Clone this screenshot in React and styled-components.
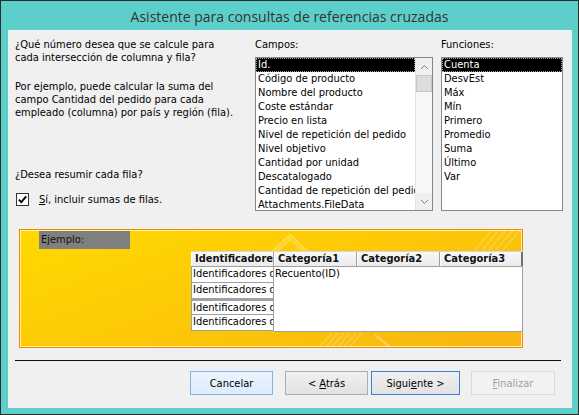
import React from "react";
import styled, { createGlobalStyle } from "styled-components";

const GlobalStyle = createGlobalStyle`
  html, body {
    margin: 0;
    padding: 0;
    background: #5ccfcb;
  }
  body {
    font-family: "DejaVu Sans Condensed", "DejaVu Sans", sans-serif;
    font-size: 11px;
    color: #000;
  }
`;

const Window = styled.div`
  width: 579px;
  height: 415px;
  box-sizing: border-box;
  border: 1px solid #2b2b2b;
  background: #5ccfcb;
  display: flex;
  flex-direction: column;
`;

const TitleBar = styled.div`
  height: 29px;
  display: flex;
  align-items: center;
  justify-content: center;
  font-family: "Open Sans", sans-serif;
  font-size: 14px;
  color: #333;
  padding-top: 1px;
  box-sizing: border-box;
`;

const Client = styled.div`
  flex: 1;
  margin: 0 6px 6px 7px;
  background: #f0f0f0;
  padding: 8px 8px 0 7px;
  display: flex;
  flex-direction: column;
`;

const TopSection = styled.div`
  display: grid;
  grid-template-columns: 232px 178px 122px;
  column-gap: 8px;
`;

const Column = styled.div`
  display: flex;
  flex-direction: column;
`;

const Text = styled.div`
  line-height: 13px;
  margin-top: ${p => p.$mt || 0}px;
  white-space: nowrap;
`;

const CheckRow = styled.label`
  display: flex;
  align-items: center;
  height: 13px;
  margin-top: 12px;
  margin-left: 1px;
  gap: 10px;
`;

const CheckBox = styled.span`
  width: 13px;
  height: 13px;
  box-sizing: border-box;
  border: 1px solid #333;
  background: #fff;
  display: flex;
  align-items: center;
  justify-content: center;
`;

const ListBox = styled.div`
  margin-top: 6px;
  height: 154px;
  box-sizing: border-box;
  border: 1px solid #828790;
  background: #fff;
  display: flex;
  overflow: hidden;
`;

const Items = styled.div`
  flex: 1;
  min-width: 0;
  overflow: hidden;
`;

const Item = styled.div`
  height: 14px;
  line-height: 14px;
  padding-left: 2px;
  white-space: nowrap;
  overflow: hidden;
  ${p =>
    p.$selected &&
    `
    background: #000;
    color: #fff;
    outline: 1px dotted #9a9a9a;
    outline-offset: -1px;
  `}
`;

const ScrollBar = styled.div`
  width: 16px;
  display: flex;
  flex-direction: column;
  background: #f7f7f7;
  border-left: 1px solid #e3e3e3;
`;

const Arrow = styled.div`
  height: 17px;
  display: flex;
  align-items: center;
  justify-content: center;
  background: #f0f0f0;
`;

const Thumb = styled.div`
  height: 17px;
  box-sizing: border-box;
  background: #dcdcdc;
  border: 1px solid #c6c6c6;
`;

const Track = styled.div`
  flex: 1;
`;

const Panel = styled.div`
  position: relative;
  margin: 18px 0 0 4px;
  width: 504px;
  height: 119px;
  box-sizing: border-box;
  border: 1px solid #f28a00;
  box-shadow: inset 0 0 0 1px #fff2b0;
  background: linear-gradient(160deg, #ffd900 0%, #fdca05 45%, #f8b512 100%);
  padding: 1px 0 0 19px;
`;

const Decor = styled.svg`
  position: absolute;
  inset: 0;
  width: 100%;
  height: 100%;
  pointer-events: none;
`;

const PanelBody = styled.div`
  position: relative;
  display: flex;
  flex-direction: column;
  align-items: flex-start;
`;

const ExampleTag = styled.div`
  width: 91px;
  height: 18px;
  line-height: 17px;
  background: #808080;
  color: #111;
  padding-left: 2px;
  box-sizing: border-box;
`;

const Grid = styled.div`
  margin: 2px 0 0 152px;
  width: 332px;
  display: flex;
  flex-direction: column;
`;

const HeaderRow = styled.div`
  display: flex;
  height: 16px;
  border-top: 1px solid #d8d8d8;
  border-bottom: 1px solid #a0a0a0;
  box-sizing: border-box;
`;

const HeaderCell = styled.div`
  width: ${p => p.$w}px;
  box-sizing: border-box;
  background: linear-gradient(#f7f7f7, #ececec);
  border-left: 1px solid #fff;
  border-right: ${p => (p.$last ? "2px solid #6f6f6f" : "1px solid #a0a0a0")};
  font-weight: bold;
  line-height: 14px;
  padding-left: 3px;
  white-space: nowrap;
  overflow: hidden;
  color: #111;
`;

const Body = styled.div`
  display: flex;
`;

const RowHeads = styled.div`
  width: 83px;
  display: flex;
  flex-direction: column;
`;

const RowHead = styled.div`
  height: 16px;
  box-sizing: border-box;
  background: #fff;
  border: 1px solid #a0a0a0;
  border-top-width: ${p => (p.$first ? 0 : p.$double ? 2 : 0)}px;
  line-height: 14px;
  padding-left: 1px;
  white-space: nowrap;
  overflow: hidden;
`;

const DataArea = styled.div`
  flex: 1;
  height: 65px;
  box-sizing: border-box;
  background: #fff;
  border: 1px solid #a0a0a0;
  border-top: 0;
  border-left: 0;
  line-height: 14px;
  padding: 0 1px;
`;

const Separator = styled.div`
  margin-top: 12px;
  width: 546px;
  height: 1px;
  background: #101010;
`;

const ButtonRow = styled.div`
  display: flex;
  margin-top: 10px;
  padding-left: 175px;
`;

const Button = styled.button`
  width: ${p => p.$w}px;
  height: 24px;
  margin-left: ${p => p.$ml || 0}px;
  box-sizing: border-box;
  font-family: "DejaVu Sans Condensed", "DejaVu Sans", sans-serif;
  font-size: 11px;
  padding: 0;
  color: ${p => (p.$disabled ? "#a0a0a0" : "#000")};
  border: 1px solid
    ${p =>
      p.$hover ? "#7eb4ea" : p.$default ? "#3c7fd9" : p.$disabled ? "#d9d9d9" : "#adadad"};
  background: ${p =>
    p.$hover
      ? "linear-gradient(#ebf4fd, #dcecfc)"
      : p.$disabled
      ? "#f2f2f2"
      : "linear-gradient(#f0f0f0, #e2e2e2)"};
  u {
    text-decoration: underline;
    text-underline-offset: 1px;
  }
`;

const campos = [
  "Id.",
  "Código de producto",
  "Nombre del producto",
  "Coste estándar",
  "Precio en lista",
  "Nivel de repetición del pedido",
  "Nivel objetivo",
  "Cantidad por unidad",
  "Descatalogado",
  "Cantidad de repetición del pedido",
  "Attachments.FileData",
];

const funciones = [
  "Cuenta",
  "DesvEst",
  "Máx",
  "Mín",
  "Primero",
  "Promedio",
  "Suma",
  "Último",
  "Var",
];

const Chevron = ({ up }) => (
  <svg width="9" height="6" viewBox="0 0 9 6">
    <path
      d={up ? "M1 5 L4.5 1.5 L8 5" : "M1 1 L4.5 4.5 L8 1"}
      fill="none"
      stroke="#7a7a7a"
      strokeWidth="1"
    />
  </svg>
);

export default function App() {
  return (
    <>
      <GlobalStyle />
      <Window>
        <TitleBar>Asistente para consultas de referencias cruzadas</TitleBar>
        <Client>
          <TopSection>
            <Column>
              <Text>¿Qué número desea que se calcule para</Text>
              <Text>cada intersección de columna y fila?</Text>
              <Text $mt={16}>Por ejemplo, puede calcular la suma del</Text>
              <Text>campo Cantidad del pedido para cada</Text>
              <Text>empleado (columna) por país y región (fila).</Text>
              <Text $mt={49}>¿Desea resumir cada fila?</Text>
              <CheckRow>
                <CheckBox>
                  <svg width="11" height="11" viewBox="0 0 11 11">
                    <path d="M1.8 5.6 L4.3 8.2 L9.2 2.4" fill="none" stroke="#000" strokeWidth="1.9" />
                  </svg>
                </CheckBox>
                <span>
                  <u>S</u>í, incluir sumas de filas.
                </span>
              </CheckRow>
            </Column>
            <Column>
              <Text>Campos:</Text>
              <ListBox>
                <Items>
                  {campos.map((c, i) => (
                    <Item key={c} $selected={i === 0}>
                      {c}
                    </Item>
                  ))}
                </Items>
                <ScrollBar>
                  <Arrow>
                    <Chevron up />
                  </Arrow>
                  <Thumb />
                  <Track />
                  <Arrow>
                    <Chevron />
                  </Arrow>
                </ScrollBar>
              </ListBox>
            </Column>
            <Column>
              <Text>Funciones:</Text>
              <ListBox>
                <Items>
                  {funciones.map((f, i) => (
                    <Item key={f} $selected={i === 0}>
                      {f}
                    </Item>
                  ))}
                </Items>
              </ListBox>
            </Column>
          </TopSection>

          <Panel>
            <Decor viewBox="0 0 502 117" preserveAspectRatio="none">
              <g stroke="#fff" strokeOpacity="0.28" fill="none" strokeWidth="2">
                <path d="M252 22 L270 5 L288 22" />
                <path d="M256 22 L270 9 L284 22" />
              </g>
              <g stroke="#fff" strokeOpacity="0.18" strokeWidth="2">
                <path d="M455 20 L472 0" />
                <path d="M462 20 L479 0" />
                <path d="M469 20 L486 0" />
                <path d="M476 20 L493 0" />
                <path d="M483 20 L500 0" />
                <path d="M300 117 L312 103" />
                <path d="M306 117 L318 103" />
                <path d="M312 117 L324 103" />
                <path d="M318 117 L330 103" />
                <path d="M324 117 L336 103" />
                <path d="M330 117 L342 103" />
              </g>
              <path d="M355 105 L370 117" stroke="#fff" strokeOpacity="0.35" strokeWidth="2" />
            </Decor>
            <PanelBody>
              <ExampleTag>Ejemplo:</ExampleTag>
              <Grid>
                <HeaderRow>
                  <HeaderCell $w={83}>Identificadores de</HeaderCell>
                  <HeaderCell $w={83}>Categoría1</HeaderCell>
                  <HeaderCell $w={83}>Categoría2</HeaderCell>
                  <HeaderCell $w={83} $last>
                    Categoría3
                  </HeaderCell>
                </HeaderRow>
                <Body>
                  <RowHeads>
                    {[0, 1, 2, 3].map(i => (
                      <RowHead key={i} $first={i === 0} $double={i === 2}>
                        Identificadores de producto
                      </RowHead>
                    ))}
                  </RowHeads>
                  <DataArea>Recuento(ID)</DataArea>
                </Body>
              </Grid>
            </PanelBody>
          </Panel>

          <Separator />

          <ButtonRow>
            <Button $w={83} $hover>
              Cancelar
            </Button>
            <Button $w={83} $ml={12}>
              &lt; <u>A</u>trás
            </Button>
            <Button $w={89} $ml={3} $default>
              Sigui<u>e</u>nte &gt;
            </Button>
            <Button $w={84} $ml={11} $disabled disabled>
              <u>F</u>inalizar
            </Button>
          </ButtonRow>
        </Client>
      </Window>
    </>
  );
}
